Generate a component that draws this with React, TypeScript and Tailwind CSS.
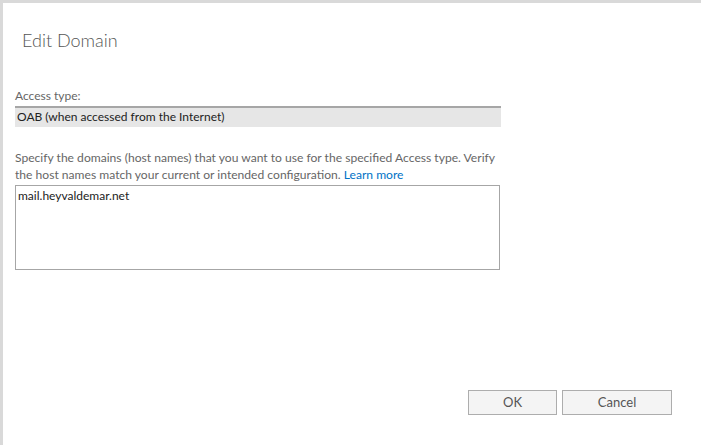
import React, { useState } from 'react';

const App: React.FC = () => {
  const [domains, setDomains] = useState('mail.heyvaldemar.net');

  return (
    <div className="w-[701px] h-[445px] bg-[#d9d9d9] pl-[3px] pt-[3px] overflow-hidden font-['Segoe_UI',Lato,sans-serif]">
      <div className="w-full h-full bg-white flex flex-col">
        <h1 className="pl-[19px] pt-[26px] text-[18px] leading-[23px] font-light text-[#555]">Edit Domain</h1>

        <div className="pl-[12px] pt-[36px] w-[498px]">
          <label className="block text-[12px] leading-[16px] text-[#666]">Access type:</label>
          <div className="mt-[2px] h-[21px] bg-[#e6e6e6] border-t-2 border-[#a6a6a6] pl-[2px] text-[12px] leading-[18px] text-[#222]">
            OAB (when accessed from the Internet)
          </div>

          <p className="mt-[22px] text-[12.1px] leading-[17px] text-[#666]">
            Specify the domains (host names) that you want to use for the specified Access type. Verify
            <br />
            the host names match your current or intended configuration.{' '}
            <a href="#" className="text-[#0072c6]">Learn more</a>
          </p>
          <textarea
            value={domains}
            onChange={(e) => setDomains(e.target.value)}
            className="mt-[2px] block w-[485px] h-[85px] border border-[#a6a6a6] px-[2px] py-[2px] text-[12px] leading-[16px] text-[#222] resize-none outline-none"
          />
        </div>

        <div className="mt-auto mb-[30px] flex justify-end gap-[5px] pr-[29px]">
          <button className="w-[89px] h-[25px] bg-[#f4f4f4] border border-[#adadad] text-[13px] text-[#555]">OK</button>
          <button className="w-[110px] h-[25px] bg-[#f4f4f4] border border-[#adadad] text-[13px] text-[#555]">Cancel</button>
        </div>
      </div>
    </div>
  );
};

export default App;
